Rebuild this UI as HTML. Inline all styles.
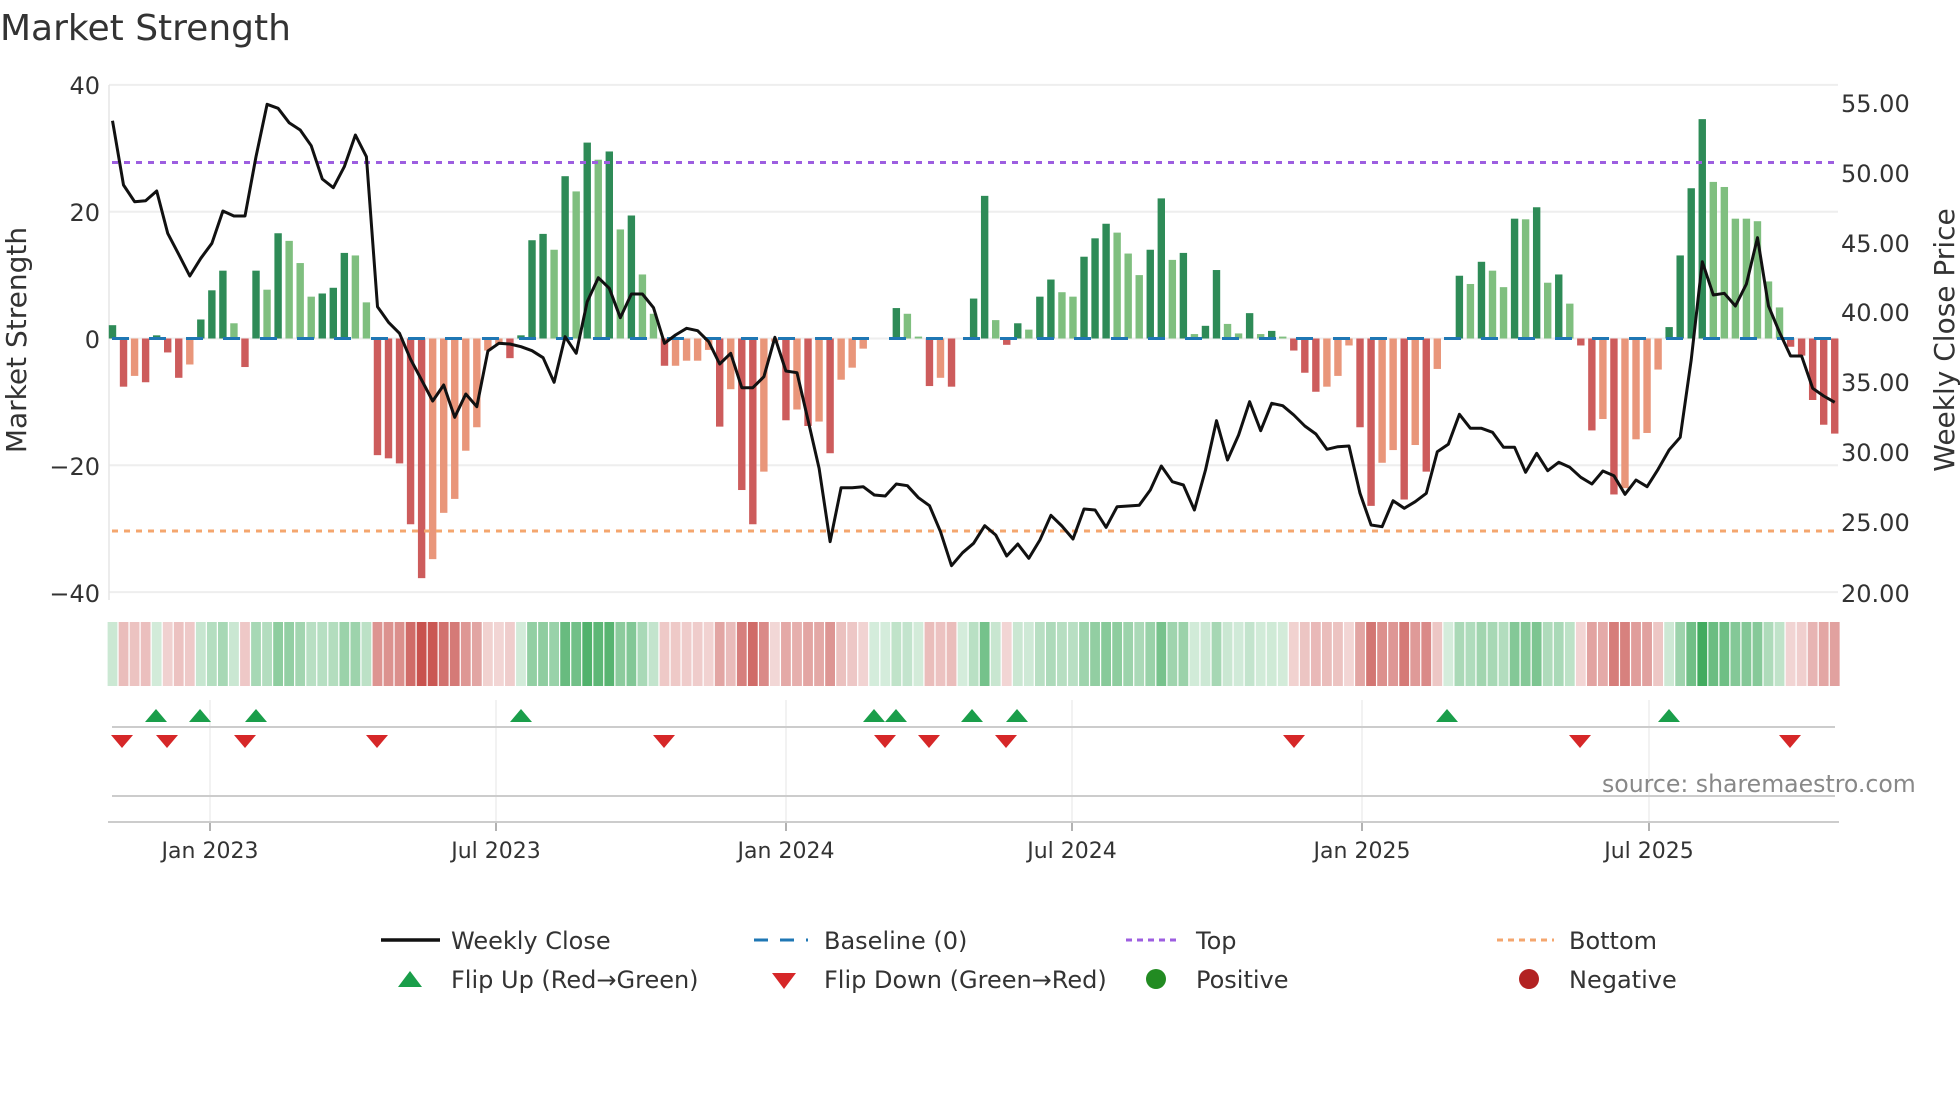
<!DOCTYPE html>
<html><head><meta charset="utf-8"><style>
html,body{margin:0;padding:0;background:#fff;width:1960px;height:1102px;overflow:hidden}
svg{display:block}
text{font-family:"DejaVu Sans","Liberation Sans",sans-serif;fill:#333}
</style></head><body>
<svg id="s" width="1960" height="1102" viewBox="0 0 1960 1102" xmlns="http://www.w3.org/2000/svg">
<text x="0" y="40" font-size="36">Market Strength</text>
<g id="grid"></g>
<g id="bars"></g>
<g id="over"></g>
<g font-size="24">
<text x="100" y="94" text-anchor="end">40</text>
<text x="100" y="221" text-anchor="end">20</text>
<text x="100" y="348" text-anchor="end">0</text>
<text x="100" y="475" text-anchor="end">−20</text>
<text x="100" y="602" text-anchor="end">−40</text>
<text x="1841" y="112">55.00</text>
<text x="1841" y="182">50.00</text>
<text x="1841" y="252">45.00</text>
<text x="1841" y="321">40.00</text>
<text x="1841" y="391">35.00</text>
<text x="1841" y="461">30.00</text>
<text x="1841" y="531">25.00</text>
<text x="1841" y="602">20.00</text>
</g>
<text font-size="28" text-anchor="middle" transform="translate(26,340) rotate(-90)">Market Strength</text>
<text font-size="28" text-anchor="middle" transform="translate(1954,340) rotate(-90)">Weekly Close Price</text>
<text x="1602" y="792" font-size="23.6" style="fill:#888">source: sharemaestro.com</text>
<g font-size="22" text-anchor="middle">
<text x="210" y="858">Jan 2023</text>
<text x="496" y="858">Jul 2023</text>
<text x="786" y="858">Jan 2024</text>
<text x="1072" y="858">Jul 2024</text>
<text x="1362" y="858">Jan 2025</text>
<text x="1649" y="858">Jul 2025</text>
</g>
<g font-size="24">
<line x1="381" y1="940" x2="440" y2="940" stroke="#111" stroke-width="3.5"/>
<text x="451" y="949">Weekly Close</text>
<line x1="754" y1="940" x2="808" y2="940" stroke="#1f77b4" stroke-width="3" stroke-dasharray="14,12"/>
<text x="824" y="949">Baseline (0)</text>
<line x1="1126" y1="940" x2="1181" y2="940" stroke="#9d5ee0" stroke-width="3" stroke-dasharray="6,5"/>
<text x="1196" y="949">Top</text>
<line x1="1497" y1="940" x2="1554" y2="940" stroke="#f4a66e" stroke-width="3" stroke-dasharray="6,5"/>
<text x="1569" y="949">Bottom</text>
<polygon points="398,987 422,987 410,971" fill="#1a9e4a"/>
<text x="451" y="988">Flip Up (Red→Green)</text>
<polygon points="772,973 796,973 784,989" fill="#d62728"/>
<text x="824" y="988">Flip Down (Green→Red)</text>
<circle cx="1156" cy="979" r="10" fill="#228b22"/>
<text x="1196" y="988">Positive</text>
<circle cx="1529" cy="979" r="10" fill="#b22222"/>
<text x="1569" y="988">Negative</text>
</g>
</svg>
<script>
var V=[2.1,-7.6,-5.9,-6.9,0.5,-2.2,-6.2,-4.1,3,7.6,10.7,2.4,-4.5,10.7,7.7,16.6,15.4,11.9,6.6,7.1,8,13.5,13.1,5.7,-18.4,-18.9,-19.7,-29.3,-37.8,-34.8,-27.5,-25.3,-17.7,-14,-1.9,-1,-3.1,0.5,15.5,16.5,14,25.6,23.2,30.9,28.2,29.5,17.2,19.4,10.1,3.9,-4.3,-4.3,-3.5,-3.5,-1.8,-13.9,-8,-23.9,-29.3,-21,-0.5,-12.9,-11.2,-13.8,-13.1,-18.1,-6.5,-4.6,-1.6,0,0,4.8,3.9,0.3,-7.5,-6.2,-7.6,0,6.3,22.5,2.9,-1,2.4,1.4,6.6,9.3,7.3,6.6,12.9,15.8,18.1,16.7,13.4,10,14,22.1,12.4,13.5,0.7,2,10.8,2.3,0.8,4,0.7,1.2,0.3,-1.9,-5.4,-8.4,-7.6,-5.9,-1.1,-14,-26.4,-19.6,-17.6,-25.4,-16.8,-21,-4.8,0,9.9,8.6,12.1,10.7,8.1,18.9,18.8,20.7,8.8,10.1,5.5,-1.1,-14.5,-12.7,-24.6,-23.6,-15.9,-14.9,-4.9,1.8,13.1,23.7,34.6,24.7,23.9,18.9,18.9,18.5,9,4.9,-1.3,-2.7,-9.7,-13.6,-15];
var P=[122,315,365,362,333,460,523,588,535,490,393,408,408,230,73,85,128,150,197,297,323,260,165,230,680,727,760,838,900,963,915,1012,942,980,813,790,792,800,812,833,907,770,820,
665,593,625,713,642,642,683,790,765,745,752,785,852,820,923,923,890,772,873,878,1020,1165,1385,1223,1223,1220,1245,1248,1212,1217,1253,1277,1355,1457,1418,1390,1337,1365,1428,1392,1435,1380,
1306,1338,1377,1287,1290,1342,1280,1278,1276,1230,1158,1205,1215,1290,1170,1022,1140,1065,965,1052,970,977,1005,1038,1062,1108,1100,1098,1240,1335,1340,1262,1285,1265,1240,1115,1093,1003,1045,1045,1057,
1102,1102,1177,1120,1172,1147,1162,1192,1212,1173,1187,1243,1200,1220,1168,1110,1072,840,545,645,640,678,612,473,678,757,828,828,925,948,967];
var NS='http://www.w3.org/2000/svg';
function el(p,t,a){var e=document.createElementNS(NS,t);for(var k in a)e.setAttribute(k,a[k]);document.getElementById(p).appendChild(e);return e;}
var Z=338.5,U=6.34,X0=112.5,DX=11.04;
[40,20,0,-20,-40].forEach(function(v){el('grid','line',{x1:109,x2:1838,y1:Z-v*U,y2:Z-v*U,stroke:'#eeeeee','stroke-width':2});});
el('grid','line',{x1:109,x2:109,y1:85,y2:600,stroke:'#e6e6e6','stroke-width':1.5});
[210,496,786,1072,1362,1649].forEach(function(x){
 el('grid','line',{x1:x,x2:x,y1:700,y2:822,stroke:'#eeeeee','stroke-width':1.5});
 el('grid','line',{x1:x,x2:x,y1:822,y2:831,stroke:'#999','stroke-width':1.5});
});
el('grid','line',{x1:112,x2:1835,y1:727,y2:727,stroke:'#cccccc','stroke-width':2});
el('grid','line',{x1:112,x2:1835,y1:796,y2:796,stroke:'#cccccc','stroke-width':2});
el('grid','line',{x1:108,x2:1839,y1:822,y2:822,stroke:'#cccccc','stroke-width':2});
for(var i=0;i<V.length;i++){
 var v=V[i],p=i?V[i-1]:0,x=X0+DX*i;
 var dark=(i==0)||(v*p<=0)||(Math.abs(v)>Math.abs(p));
 var c=v>=0?(dark?'#2e8b57':'#7fbf7f'):(dark?'#cd5c5c':'#e9967a');
 var h=Math.abs(v)*U;
 if(h>0.3) el('bars','rect',{x:x-3.7,width:7.4,y:v>=0?Z-h:Z,height:h,fill:c});
 var a=Math.min(1,0.22+0.78*Math.abs(v)/36);
 var sc=v>=0?'rgba(60,168,90,'+a+')':'rgba(200,82,78,'+a+')';
 el('bars','rect',{x:x-4.9,width:9.8,y:622,height:64,fill:sc});
}
el('over','line',{x1:112,x2:1838,y1:Z,y2:Z,stroke:'#1f77b4','stroke-width':3,'stroke-dasharray':'17,20'});
el('over','line',{x1:112,x2:1838,y1:162.5,y2:162.5,stroke:'#9d5ee0','stroke-width':3,'stroke-dasharray':'6,6'});
el('over','line',{x1:112,x2:1838,y1:531,y2:531,stroke:'#f4a66e','stroke-width':3,'stroke-dasharray':'6,6'});
var pts=P.map(function(y,i){return (X0+DX*i).toFixed(1)+','+(80+y/3).toFixed(1);}).join(' ');
el('over','polyline',{points:pts,fill:'none',stroke:'#111','stroke-width':3,'stroke-linejoin':'round'});
[156,200,256,521,874,896,972,1017,1447,1669].forEach(function(x){el('over','polygon',{points:(x-11)+',722 '+(x+11)+',722 '+x+',709',fill:'#1a9e4a'});});
[122,167,245,377,664,885,929,1006,1294,1580,1790].forEach(function(x){el('over','polygon',{points:(x-11)+',735 '+(x+11)+',735 '+x+',748',fill:'#d62728'});});
</script>
</body></html>
